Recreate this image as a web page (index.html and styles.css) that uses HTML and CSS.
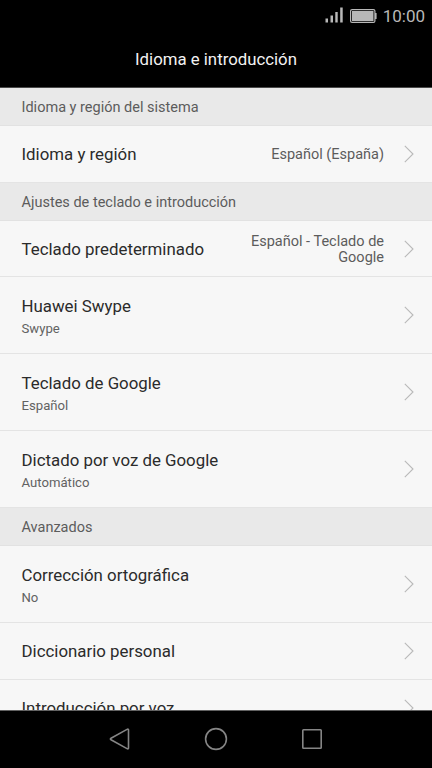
FILE: index.html
```html
<!DOCTYPE html>
<html lang="es">
<head>
<meta charset="utf-8">
<title>Idioma e introducción</title>
<link rel="stylesheet" href="styles.css">
</head>
<body>
<svg class="defs" width="0" height="0"><symbol id="chevron" viewBox="0 0 10 18"><path d="M.8 .8L9 9L.8 17.2" fill="none" stroke="#b9b9b9" stroke-width="1.1"/></symbol></svg>
<div class="status">
  <svg class="signal" width="18" height="16" viewBox="0 0 18 16"><path d="M.5 11.5H3V15.5H.5zM5.5 8.5H8v7H5.5zM10.3 5h2.4v10.5h-2.4zM15.2 .5h2.5v15h-2.5z" fill="#b8b8b8"/></svg>
  <svg class="battery" width="27" height="14" viewBox="0 0 27 14"><rect x=".6" y=".6" width="24.3" height="12.8" rx="1.5" fill="none" stroke="#b8b8b8" stroke-width="1.2"/><path d="M2 2h21.5v10H2zM25 4h1.6v6H25z" fill="#b8b8b8"/></svg>
  <span class="clock">10:00</span>
</div>
<header class="header"><h1 class="heading">Idioma e introducción</h1></header>
<main class="list">
  <h2 class="section">Idioma y región del sistema</h2>
  <div class="row"><div class="title">Idioma y región</div><div class="value">Español (España)</div><svg class="chevron"><use href="#chevron"/></svg></div>
  <h2 class="section">Ajustes de teclado e introducción</h2>
  <div class="row compact"><div class="title">Teclado predeterminado</div><div class="value">Español - Teclado de<br>Google</div><svg class="chevron"><use href="#chevron"/></svg></div>
  <div class="row tall"><div class="label"><div class="title">Huawei Swype</div><div class="sub">Swype</div></div><svg class="chevron"><use href="#chevron"/></svg></div>
  <div class="row tall"><div class="label"><div class="title">Teclado de Google</div><div class="sub">Español</div></div><svg class="chevron"><use href="#chevron"/></svg></div>
  <div class="row tall"><div class="label"><div class="title">Dictado por voz de Google</div><div class="sub">Automático</div></div><svg class="chevron"><use href="#chevron"/></svg></div>
  <h2 class="section">Avanzados</h2>
  <div class="row tall"><div class="label"><div class="title">Corrección ortográfica</div><div class="sub">No</div></div><svg class="chevron"><use href="#chevron"/></svg></div>
  <div class="row"><div class="title">Diccionario personal</div><svg class="chevron"><use href="#chevron"/></svg></div>
  <div class="row"><div class="title">Introducción por voz</div><svg class="chevron"><use href="#chevron"/></svg></div>
</main>
<nav class="nav">
  <svg width="24" height="24" viewBox="0 0 24 24"><path d="M19 2.4Q20.5 1.7 20.5 3V21Q20.5 22.3 19 21.6L3 12.8Q1.8 12 3 11.2Z"/></svg>
  <svg width="24" height="24" viewBox="0 0 24 24"><circle cx="12" cy="12" r="10.4"/></svg>
  <svg width="24" height="24" viewBox="0 0 24 24"><rect x="2.8" y="2.8" width="18.4" height="18.4" rx=".7"/></svg>
</nav>
</body>
</html>
```

FILE: styles.css
```css
* { box-sizing: border-box; }
body {
  margin: 0;
  width: 432px;
  height: 768px;
  display: flex;
  flex-direction: column;
  overflow: hidden;
  background: #000;
  font-family: Roboto, sans-serif;
}
.defs { display: none; }
.status {
  height: 32px;
  flex: none;
  display: flex;
  align-items: center;
  justify-content: flex-end;
  padding-right: 7px;
}
.signal { margin: -2px 7px 0 0; }
.battery { margin: -1px 6px 0 0; }
.clock { color: #b8b8b8; font-size: 17px; line-height: 20px; }
.header {
  height: 56px;
  flex: none;
  display: flex;
  align-items: center;
  justify-content: center;
  padding-bottom: 2px;
  border-bottom: 1px solid #4a4a4a;
}
.heading { margin: 0; font-size: 16.8px; font-weight: 400; color: #f2f2f2; }
.list {
  height: 623px;
  flex: none;
  overflow: hidden;
  background: #f7f7f7;
  border-bottom: 1px solid #626262;
}
.section {
  margin: 0;
  height: 38px;
  padding-left: 21.5px;
  background: #e9e9e9;
  border-bottom: 1px solid #e2e2e2;
  font-size: 14.5px;
  font-weight: 400;
  line-height: 39px;
  color: #5c5c5c;
}
.row {
  height: 57px;
  padding: 0 18px 0 21.5px;
  display: flex;
  align-items: center;
  border-bottom: 1px solid #e4e4e4;
}
.compact { height: 56px; }
.tall { height: 77px; }
.label { padding-top: 2px; }
.title { font-size: 16.85px; line-height: 22px; color: #2b2b2b; white-space: nowrap; }
.sub { margin-top: 4px; font-size: 13.15px; line-height: 16px; color: #626262; }
.value {
  margin-left: auto;
  margin-right: 20px;
  padding-top: 3px;
  font-size: 14.5px;
  line-height: 16.5px;
  text-align: right;
  color: #5c5c5c;
}
.chevron { width: 10px; height: 18px; flex: none; margin-left: auto; }
.value + .chevron { margin-left: 0; }
.nav {
  flex: 1;
  display: flex;
  justify-content: center;
  align-items: center;
  gap: 72px;
  padding-bottom: 1px;
}
.nav svg { fill: none; stroke: #858585; stroke-width: 1.6; }
```
